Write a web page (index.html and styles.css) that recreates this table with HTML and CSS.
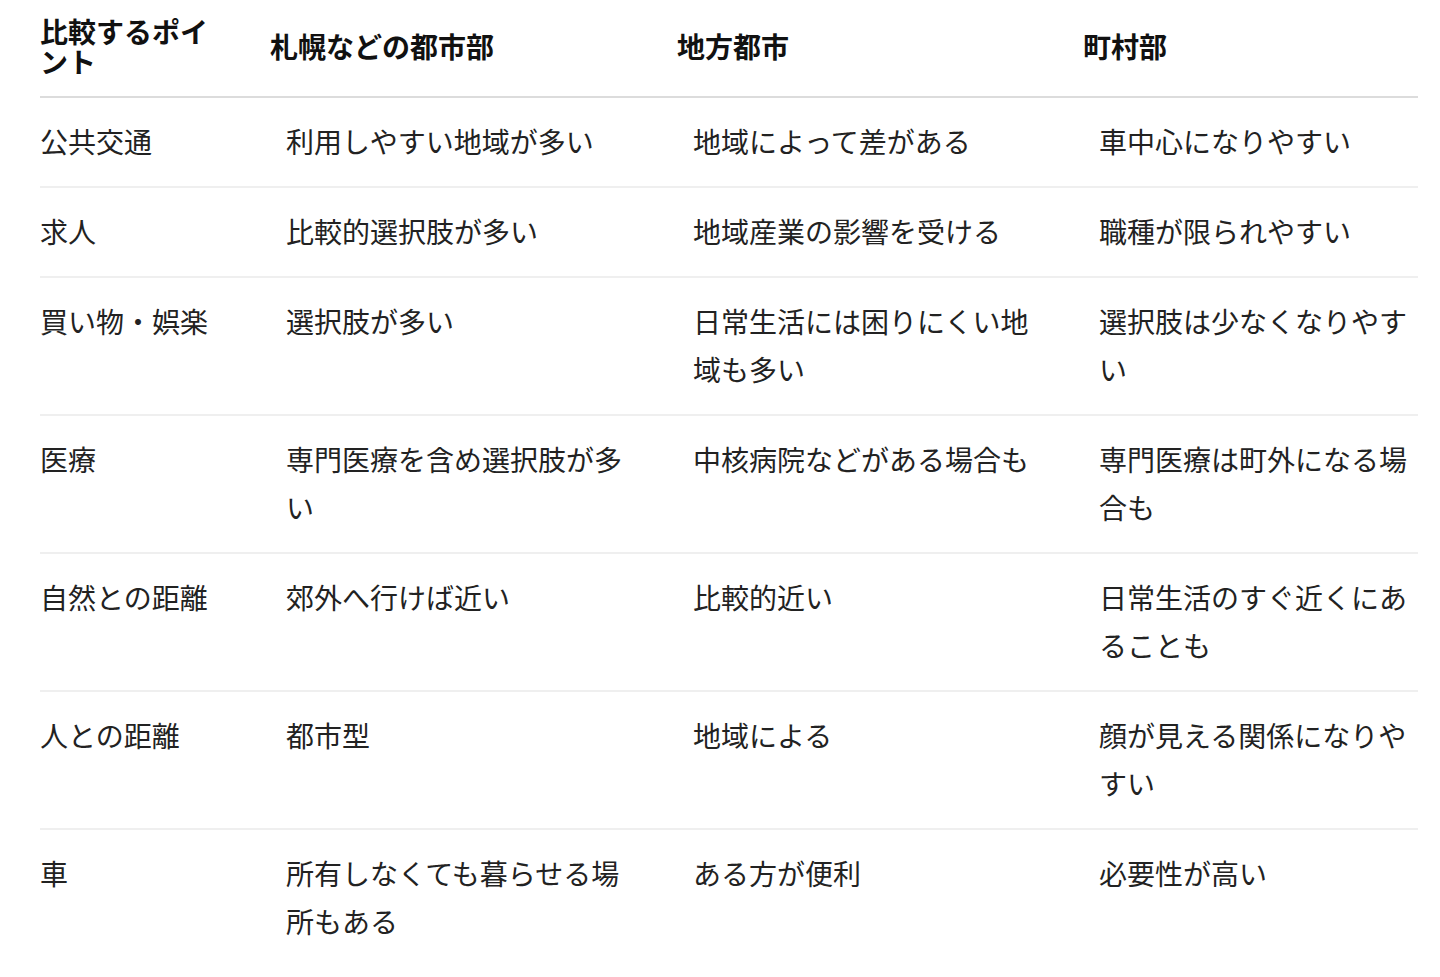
FILE: index.html
```html
<!DOCTYPE html>
<html lang="ja">
<head>
<meta charset="utf-8">
<link rel="stylesheet" href="styles.css">
<title>比較表</title>
</head>
<body>
<table class="compare">
  <colgroup>
    <col class="c1"><col class="c2"><col class="c3"><col class="c4">
  </colgroup>
  <thead>
    <tr>
      <th>比較するポイント</th>
      <th>札幌などの都市部</th>
      <th>地方都市</th>
      <th>町村部</th>
    </tr>
  </thead>
  <tbody>
    <tr><td>公共交通</td><td>利用しやすい地域が多い</td><td>地域によって差がある</td><td>車中心になりやすい</td></tr>
    <tr><td>求人</td><td>比較的選択肢が多い</td><td>地域産業の影響を受ける</td><td>職種が限られやすい</td></tr>
    <tr><td>買い物・娯楽</td><td>選択肢が多い</td><td>日常生活には困りにくい地域も多い</td><td>選択肢は少なくなりやすい</td></tr>
    <tr><td>医療</td><td>専門医療を含め選択肢が多い</td><td>中核病院などがある場合も</td><td>専門医療は町外になる場合も</td></tr>
    <tr><td>自然との距離</td><td>郊外へ行けば近い</td><td>比較的近い</td><td>日常生活のすぐ近くにあることも</td></tr>
    <tr><td>人との距離</td><td>都市型</td><td>地域による</td><td>顔が見える関係になりやすい</td></tr>
    <tr><td>車</td><td>所有しなくても暮らせる場所もある</td><td>ある方が便利</td><td>必要性が高い</td></tr>
  </tbody>
</table>
</body>
</html>
```

FILE: styles.css
```css
html, body {
  margin: 0;
  padding: 0;
  background: #ffffff;
}
body {
  padding: 0 22px 0 40px;
  font-family: "Noto Sans CJK JP", "Noto Sans", sans-serif;
  color: #222222;
}
.compare {
  width: 1378px;
  border-collapse: collapse;
  table-layout: fixed;
}
.c1 { width: 230px; }
.c2 { width: 407px; }
.c3 { width: 406px; }
.c4 { width: 335px; }

.compare th {
  text-align: left;
  font-size: 28px;
  line-height: 30px;
  font-weight: 700;
  color: #111111;
  padding: 16px 30px 20px 0;
  vertical-align: middle;
  border-bottom: 2px solid #dcdcdc;
}
.compare th:first-child { padding-right: 40px; }
.compare th:last-child { padding-right: 0; }

.compare td {
  font-size: 28px;
  line-height: 48px;
  font-weight: 400;
  padding: 19px 30px 21px 16px;
  vertical-align: top;
  border-bottom: 2px solid #efefef;
}
.compare td:first-child { padding-left: 0; }
.compare td:last-child { padding-right: 0; }
.compare tbody tr:last-child td { border-bottom: none; }
```
